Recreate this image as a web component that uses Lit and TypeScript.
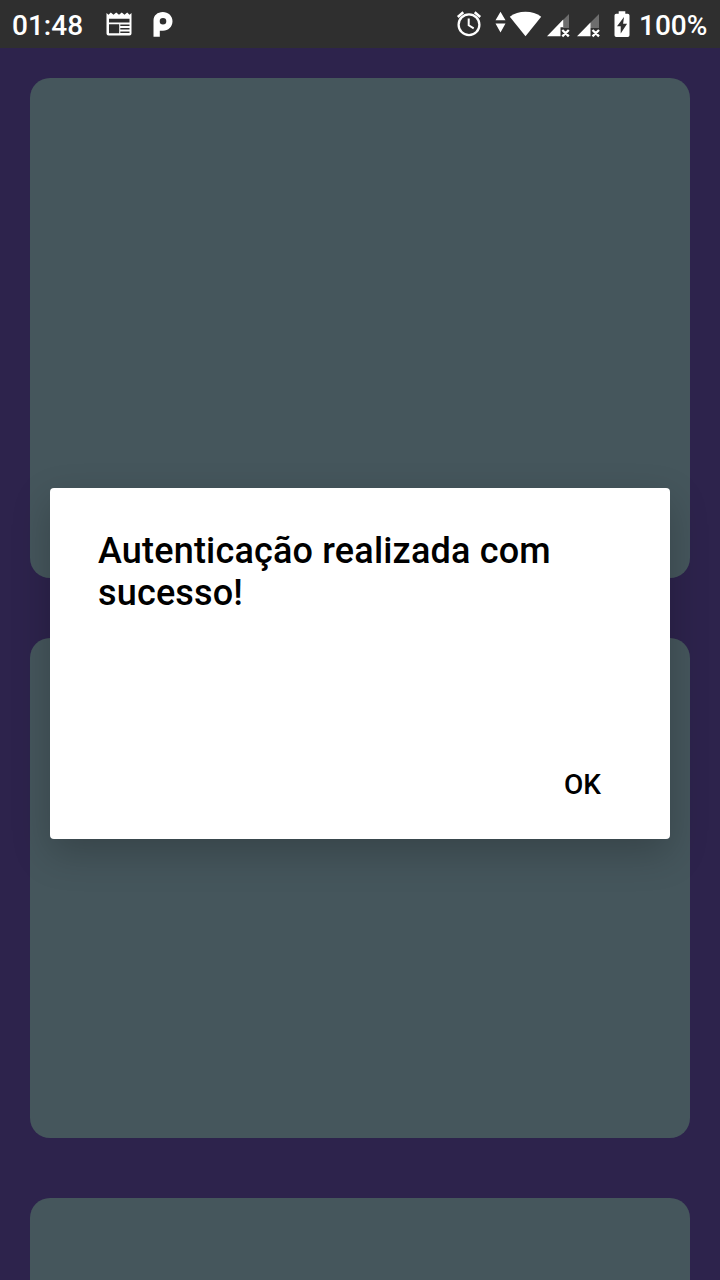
import { LitElement, html, css } from "lit";
import { customElement } from "lit/decorators.js";

@customElement("status-bar")
class StatusBar extends LitElement {
  static styles = css`
    :host { display: flex; align-items: center; justify-content: space-between; height: 48px; padding: 0 12px; box-sizing: border-box; background: #2f2f2f; color: #fff; font: 470 28px/48px Roboto, sans-serif; }
    .group { display: flex; align-items: center; height: 48px; }
    .label { padding-top: 4px; white-space: nowrap; }
    svg { display: block; flex: none; }
    .time { width: 93px; }
    .percent { width: 69px; }
  `;
  render() {
    return html`
      <div class="group">
        <span class="label time">01:48</span>
        <svg width="70" height="48" viewBox="105 0 70 48" fill="#fff">
          <path fill-rule="evenodd" d="M106.500 13l2 1.800 2.300-2.300 2.700 2.300 2.700-2.300 2.800 2.300 2.800-2.300 2.700 2.300 2.700-2.300 2.300 2.300 2-1.800v20.500a2 2 0 0 1-2 2h-21a2 2 0 0 1-2-2zM109 18.800v3.600h20.500v-3.600zM109 24.200v9h10.200v-9zM120.300 24.500v1.400h9.200v-1.400zM120.300 28v1.500h9.200v-1.500zM120.300 31.600v1.400h9.200v-1.400z"/>
          <path fill-rule="evenodd" d="M153.500 36.800V20.500C153.500 15.500 157.500 12 162.800 12s9.700 3.800 9.700 9.200-4.200 9.500-9.500 9.500h-3.200v6.100zM163 18a3.300 3.300 0 1 0 0 6.600 3.300 3.300 0 0 0 0-6.600z"/>
        </svg>
      </div>
      <div class="group">
        <svg width="184" height="48" viewBox="455 0 184 48" fill="#fff">
          <g fill="none" stroke="#fff">
            <circle cx="469" cy="24.700" r="10.400" stroke-width="2.300"/>
            <path d="M468.700 18.500v6.800l5 3" stroke-width="2"/>
            <path d="M457.800 17l5.500-4.700M480.200 17l-5.500-4.700" stroke-width="2.500"/>
          </g>
          <path d="M500.500 11.700l5 8.600h-10zM500.500 32.500l5-9h-10z"/>
          <path d="M525.500 36.200L509.800 16.800C514 13.300 519.500 11.700 525.500 11.700s11.500 1.600 15.700 5.100z"/>
          <path d="M569 14v14h-6v-8zM599 14v14h-12v-2z" fill="#6d6d6d"/>
          <path d="M547 36.300L563.200 19.500v7.800h-2.700v9zM577 36.300L590.500 22.500v4.800v9z"/>
          <path d="M562.300 30l6.500 6.300M568.800 30l-6.500 6.300M592.500 30l6.500 6.300M599 30l-6.500 6.300" stroke="#fff" stroke-width="2.300"/>
          <path fill-rule="evenodd" d="M618.700 11.300h6.600v2.500h2.500a1.700 1.700 0 0 1 1.700 1.700v19.800a1.700 1.700 0 0 1-1.700 1.700h-11.600a1.700 1.700 0 0 1-1.700-1.700v-19.800a1.700 1.700 0 0 1 1.700-1.700h2.500zM624 17l-7 9.200h3.700v7.300l6.400-9.700h-4z"/>
        </svg>
        <span class="label percent">100%</span>
      </div>
    `;
  }
}

@customElement("app-root")
class AppRoot extends LitElement {
  static styles = css`
    :host { display: block; position: relative; width: 720px; height: 1280px; overflow: hidden; background: #2d234c; font-family: Roboto, sans-serif; }
    .list { display: flex; flex-direction: column; gap: 60px; padding: 30px 30px 0; }
    .card { height: 500px; flex: none; border-radius: 20px; background: #45565c; }
    .dialog { position: absolute; left: 50px; top: 488px; width: 620px; height: 351px; box-sizing: border-box; padding: 42px 48px 32px; display: flex; flex-direction: column; justify-content: space-between; background: #fff; border-radius: 4px; color: #000; box-shadow: 0 14px 38px rgba(0,0,0,.21); }
    .title { margin: 0; font-size: 36px; line-height: 42px; font-weight: 460; letter-spacing: .18px; }
    .ok { align-self: flex-end; margin-right: 21px; border: 0; padding: 0; background: none; color: #000; font: 460 28px/44px Roboto, sans-serif; }
  `;
  render() {
    return html`
      <status-bar></status-bar>
      <div class="list">
        <div class="card"></div>
        <div class="card"></div>
        <div class="card"></div>
      </div>
      <div class="dialog" role="alertdialog">
        <h2 class="title">Autenticação realizada com sucesso!</h2>
        <button class="ok">OK</button>
      </div>
    `;
  }
}
